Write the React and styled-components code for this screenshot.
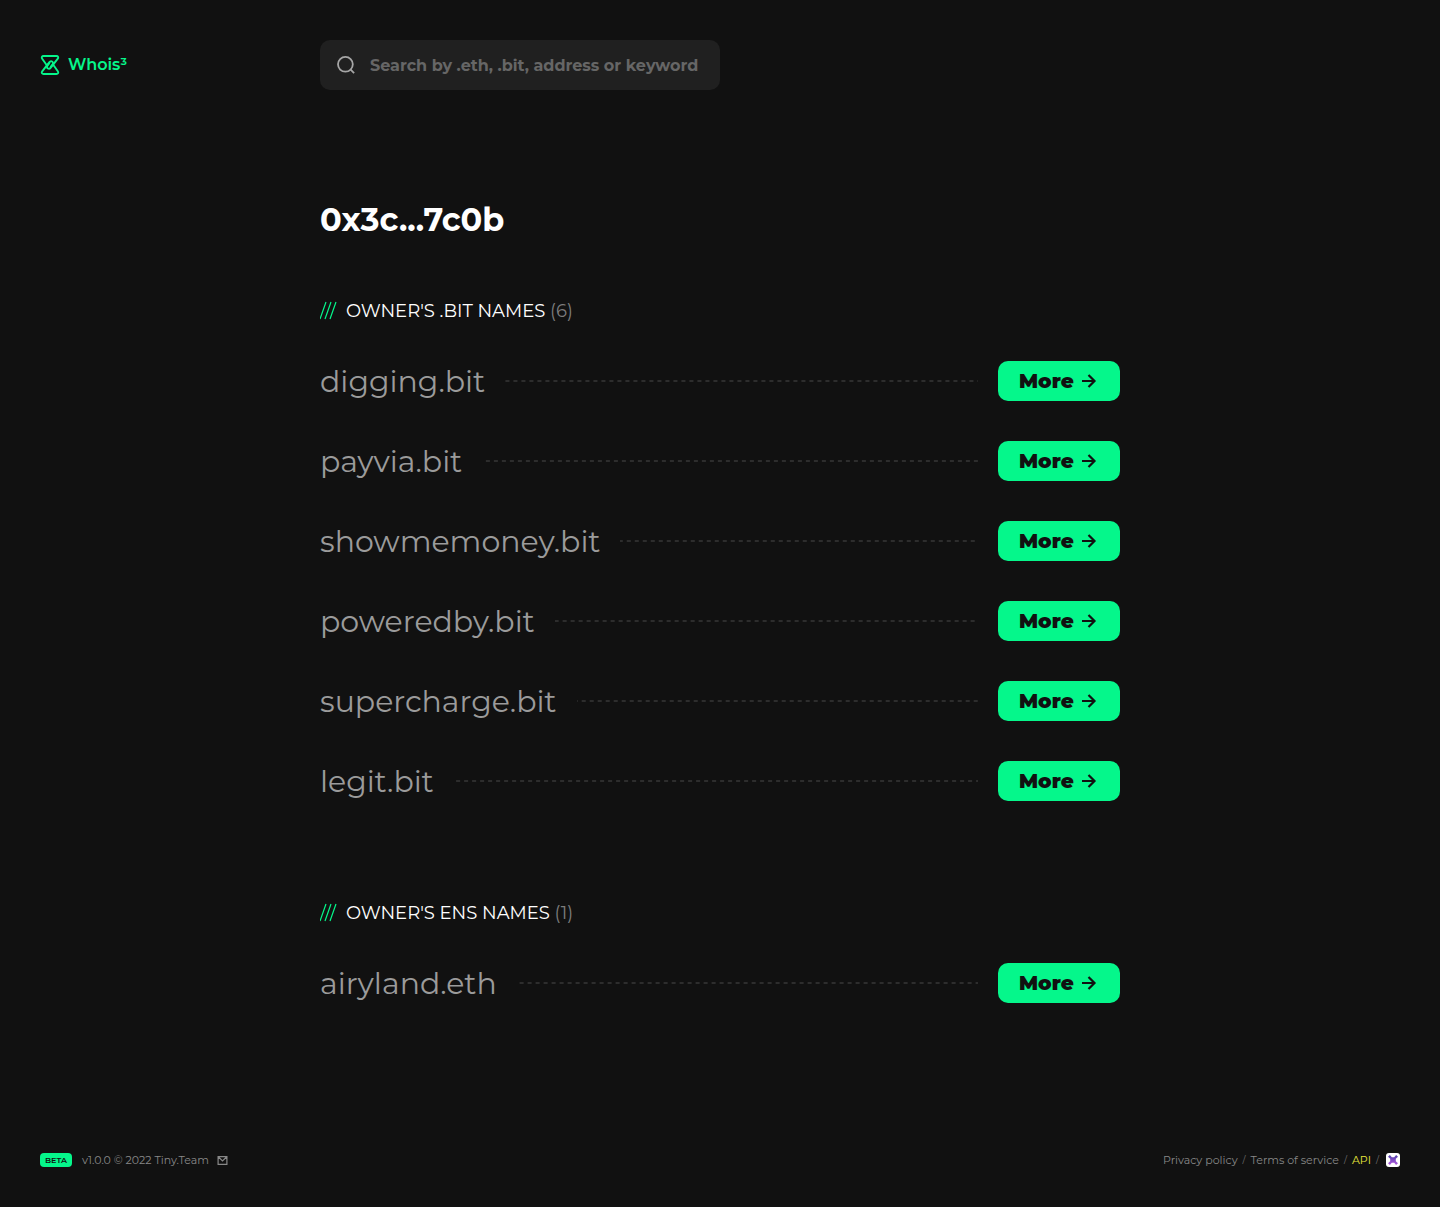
import React from "react";
import styled, { createGlobalStyle } from "styled-components";

const GlobalStyle = createGlobalStyle`
  * { box-sizing: border-box; }
  body {
    margin: 0;
    background: #111111;
    color: #ffffff;
    font-family: Montserrat, Inter, "Open Sans", sans-serif;
  }
  a { color: inherit; text-decoration: none; }
`;

const Page = styled.div`
  min-height: 100vh;
  padding: 40px;
  display: flex;
  flex-direction: column;
`;

const Header = styled.header`
  display: grid;
  grid-template-columns: 280px minmax(0, 400px);
  align-items: center;
`;

const Brand = styled.a`
  display: flex;
  align-items: center;
  gap: 8px;
  justify-self: start;
  color: #05f78b;
  font-size: 16px;
  font-weight: 600;
  line-height: 24px;
`;

const SearchBox = styled.label`
  display: flex;
  align-items: center;
  gap: 14px;
  height: 50px;
  padding: 0 16px;
  border-radius: 10px;
  background: #202020;
  color: #a6a6a6;
  svg { flex: none; }
`;

const SearchInput = styled.input`
  flex: 1;
  min-width: 0;
  padding: 0;
  border: 0;
  outline: 0;
  background: transparent;
  color: #ffffff;
  font: inherit;
  font-size: 16px;
  font-weight: 700;
  &::placeholder { color: #666666; opacity: 1; }
`;

const Main = styled.main`
  width: 100%;
  max-width: 800px;
  margin: 110px auto 0;
`;

const Title = styled.h1`
  margin: 0;
  font-size: 32px;
  font-weight: 700;
  line-height: 40px;
`;

const Section = styled.section`
  margin-top: ${(p) => (p.$spaced ? 80 : 59)}px;
`;

const Heading = styled.h2`
  display: flex;
  align-items: center;
  gap: 9px;
  margin: 0;
  font-size: 18px;
  font-weight: 400;
  line-height: 24px;
`;

const Count = styled.span`
  color: #7d7d7d;
`;

const List = styled.ul`
  margin: 18px 0 0;
  padding: 0;
  list-style: none;
`;

const Row = styled.li`
  display: flex;
  align-items: center;
  gap: 20px;
  height: 80px;
`;

const Name = styled.a`
  color: #9b9b9b;
  font-size: 30px;
  line-height: normal;
`;

const Dashes = styled.span`
  flex: 1;
  height: 2px;
  background: linear-gradient(to right, #2d2d2d 50%, transparent 50%) center / 8px 2px repeat-x;
`;

const MoreButton = styled.button`
  display: flex;
  align-items: center;
  gap: 8px;
  width: 122px;
  height: 40px;
  padding: 0 21px;
  border: 0;
  border-radius: 10px;
  background: #05f78b;
  color: #111111;
  font: inherit;
  font-size: 20px;
  font-weight: 900;
  cursor: pointer;
  svg { flex: none; }
`;

const Footer = styled.footer`
  display: flex;
  align-items: center;
  justify-content: space-between;
  height: 14px;
  margin-top: auto;
  color: #888888;
  font-size: 11px;
  line-height: 14px;
`;

const FooterGroup = styled.div`
  display: flex;
  align-items: center;
  gap: ${(p) => p.$gap}px;
`;

const Badge = styled.span`
  width: 32px;
  border-radius: 4px;
  background: #05f78b;
  color: #111111;
  font-size: 8px;
  font-weight: 600;
  text-align: center;
`;

const FooterLink = styled.a`
  display: flex;
  color: ${(p) => (p.$accent ? "#e6e63c" : "inherit")};
`;

const PartnerLink = styled(FooterLink)`
  padding-left: 2px;
`;

const Slash = styled.span`
  color: #777777;
  font-size: 9px;
`;

function LogoIcon() {
  return (
    <svg width="20" height="22" viewBox="0 0 20 22" fill="none" stroke="currentColor" strokeWidth="1.9" strokeLinecap="round" strokeLinejoin="round" aria-hidden="true">
      <path d="M7.300 12 2.200 4.700C1.200 3.300 1.900 2 3.600 2h12.800c1.700 0 2.400 1.300 1.400 2.700L10.800 13.700C9 16 6 14.200 7.300 12L9.300 9.200" />
      <path d="M12.700 10 17.800 17.300c1 1.400.3 2.700-1.400 2.700H3.600c-1.700 0-2.400-1.300-1.400-2.700L9.200 8.300C11 6 14 7.800 12.700 10L10.700 12.800" />
    </svg>
  );
}

function SearchIcon() {
  return (
    <svg width="20" height="20" viewBox="0 0 20 20" fill="none" stroke="currentColor" strokeWidth="1.8" aria-hidden="true">
      <circle cx="9.400" cy="9.300" r="7.400" />
      <path d="m14.700 14.700 3.400 3.400" />
    </svg>
  );
}

function SlashesIcon() {
  return (
    <svg width="17" height="20" viewBox="0 0 17 20" fill="none" stroke="#05f78b" strokeWidth="1.2" aria-hidden="true">
      <path d="M0 18 6 1M5 18 11 1M10 18 16 1" />
    </svg>
  );
}

function ArrowIcon() {
  return (
    <svg width="15" height="14" viewBox="0 0 15 14" fill="none" stroke="currentColor" strokeWidth="2.200" aria-hidden="true">
      <path d="M0 7h12.500M6.500 1l6 6-6 6" />
    </svg>
  );
}

function MailIcon() {
  return (
    <svg width="11" height="10" viewBox="0 0 11 10" fill="none" stroke="currentColor" strokeWidth="1.200" aria-hidden="true">
      <path d="M1.100 1.600h8.800v7.800H1.100zM1.500 2l4 4 4-4" />
    </svg>
  );
}

function PartnerIcon() {
  return (
    <svg width="14" height="14" viewBox="0 0 14 14" aria-hidden="true">
      <defs>
        <linearGradient id="partner" x1="0" y1="0" x2="0" y2="1">
          <stop offset="0" stopColor="#4d3fa8" />
          <stop offset="1" stopColor="#b35ae0" />
        </linearGradient>
      </defs>
      <rect width="14" height="14" rx="3" fill="#fff" />
      <path fill="url(#partner)" d="M2 3.700 3.900 2l1.900 2.300h2.400L10.100 2 12 3.700 9.800 5.700v2.600l2.200 2L10.100 12 8.200 9.700H5.800L3.900 12 2 10.300l2.200-2V5.700Z" />
    </svg>
  );
}

function NameSection({ title, names, spaced }) {
  return (
    <Section $spaced={spaced}>
      <Heading>
        <SlashesIcon />
        <span>{title} <Count>({names.length})</Count></span>
      </Heading>
      <List>
        {names.map((name) => (
          <Row key={name}>
            <Name href="#">{name}</Name>
            <Dashes />
            <MoreButton type="button">More <ArrowIcon /></MoreButton>
          </Row>
        ))}
      </List>
    </Section>
  );
}

const bitNames = ["digging.bit", "payvia.bit", "showmemoney.bit", "poweredby.bit", "supercharge.bit", "legit.bit"];
const ensNames = ["airyland.eth"];

export default function App() {
  return (
    <>
      <GlobalStyle />
      <Page>
        <Header>
          <Brand href="#"><LogoIcon />Whois³</Brand>
          <SearchBox>
            <SearchIcon />
            <SearchInput type="text" aria-label="Search" placeholder="Search by .eth, .bit, address or keyword" />
          </SearchBox>
        </Header>
        <Main>
          <Title>0x3c...7c0b</Title>
          <NameSection title="OWNER'S .BIT NAMES" names={bitNames} />
          <NameSection title="OWNER'S ENS NAMES" names={ensNames} spaced />
        </Main>
        <Footer>
          <FooterGroup $gap={10}>
            <Badge>BETA</Badge>
            <FooterGroup $gap={8}>
              <span>v1.0.0 © 2022 Tiny.Team</span>
              <FooterLink href="#" aria-label="Email"><MailIcon /></FooterLink>
            </FooterGroup>
          </FooterGroup>
          <FooterGroup $gap={5}>
            <FooterLink href="#">Privacy policy</FooterLink>
            <Slash>/</Slash>
            <FooterLink href="#">Terms of service</FooterLink>
            <Slash>/</Slash>
            <FooterLink href="#" $accent>API</FooterLink>
            <Slash>/</Slash>
            <PartnerLink href="#" aria-label="Partner"><PartnerIcon /></PartnerLink>
          </FooterGroup>
        </Footer>
      </Page>
    </>
  );
}
